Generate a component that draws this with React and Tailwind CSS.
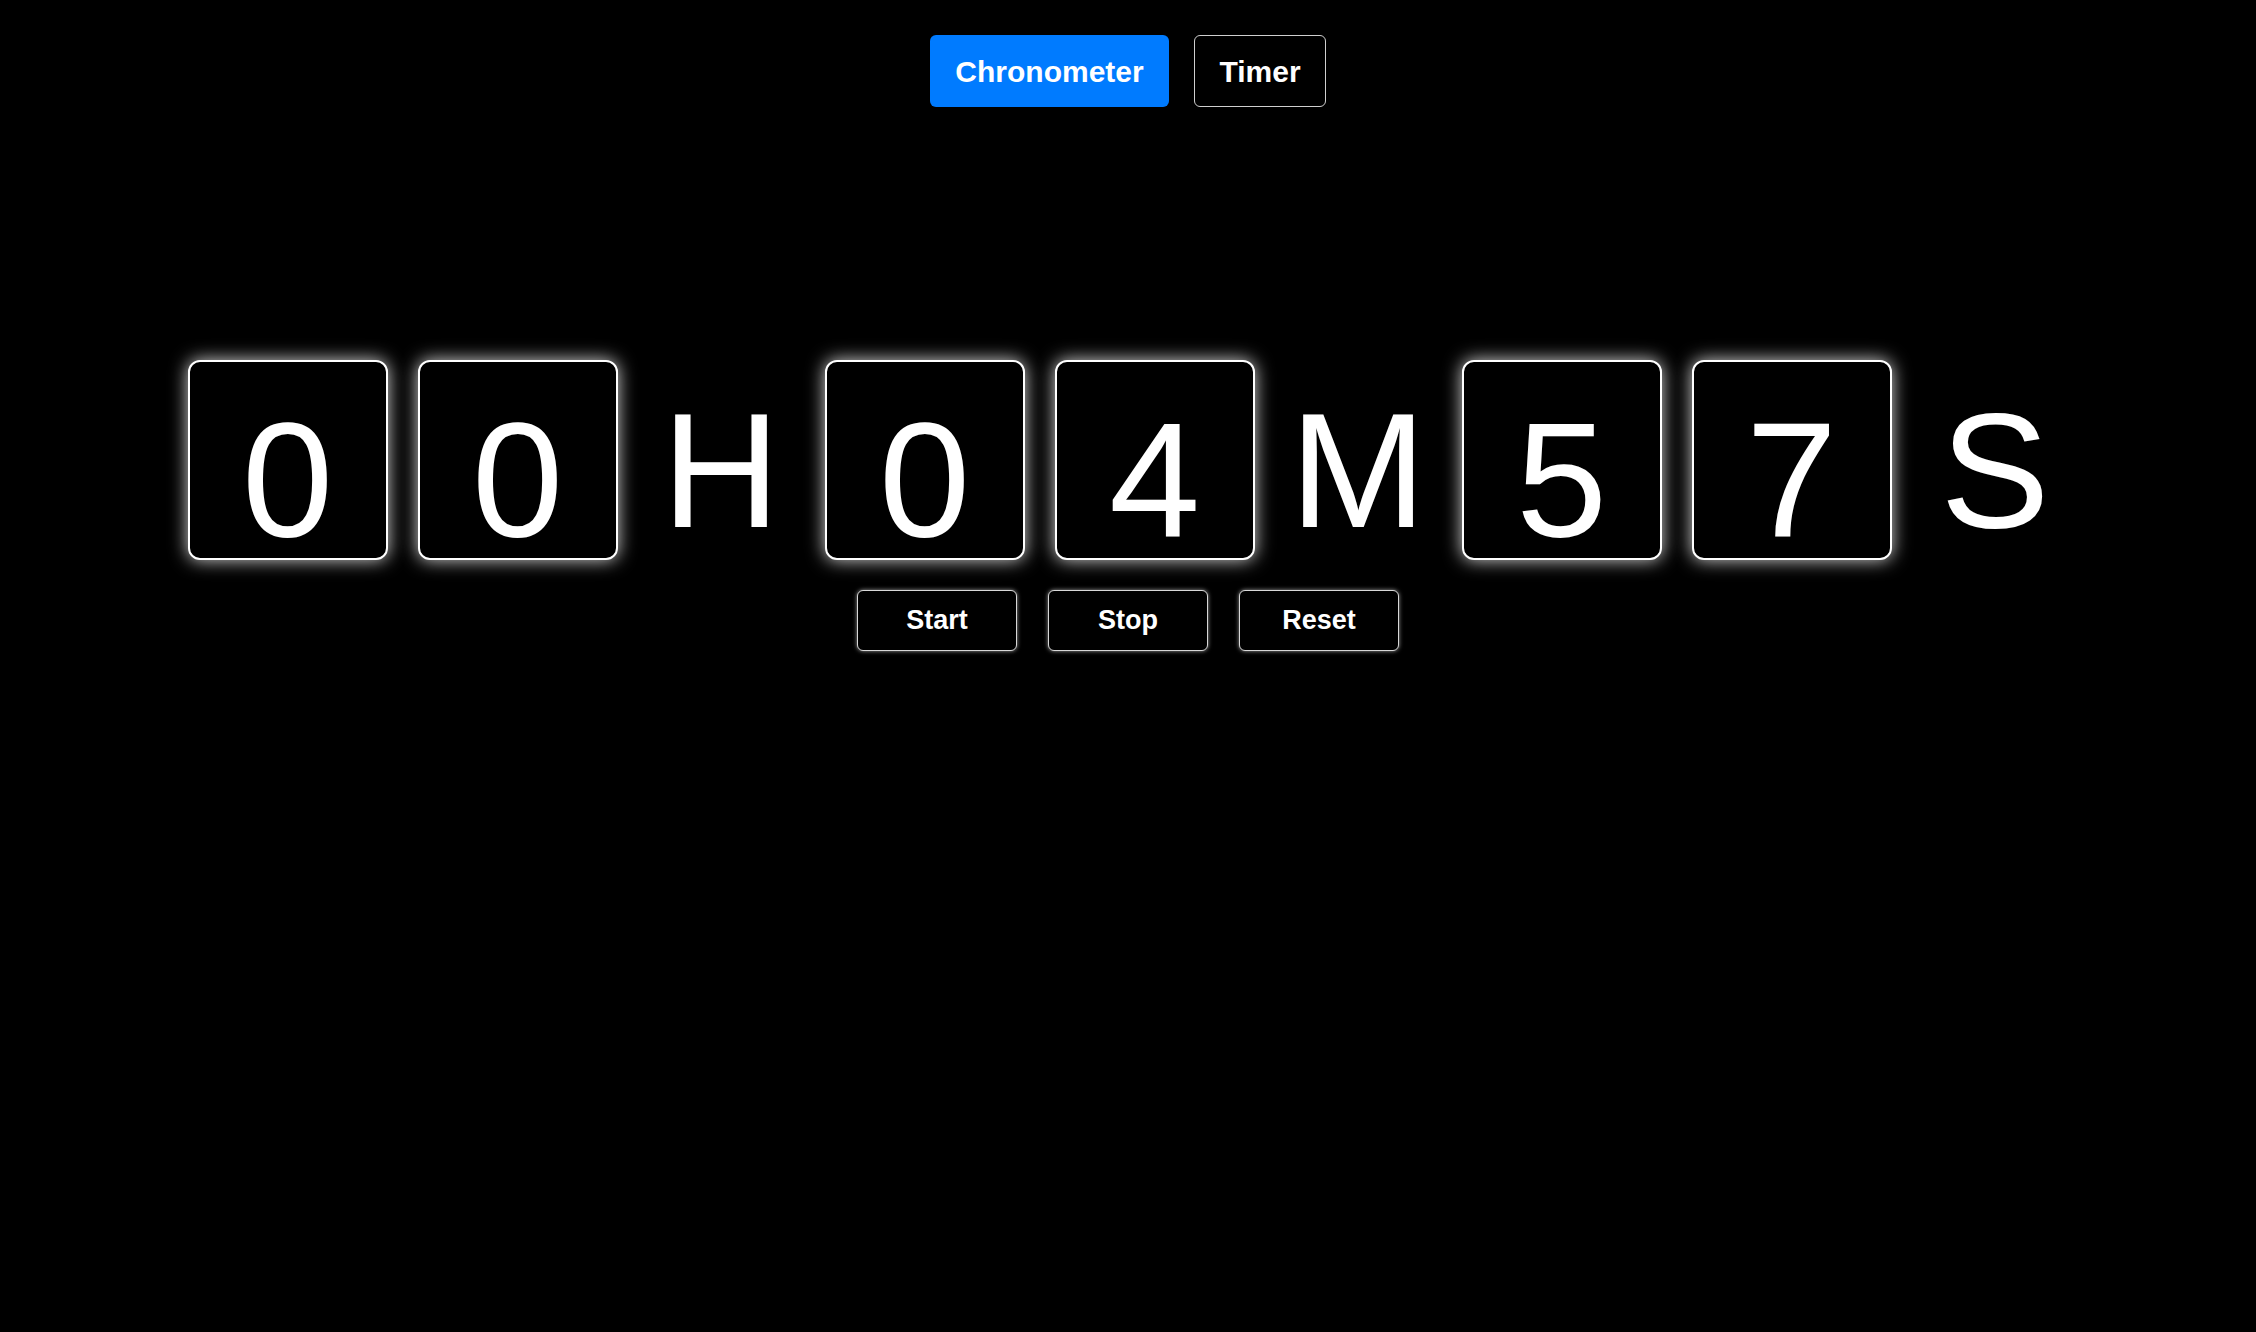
import React from "react";

const FONT = { fontFamily: '"Liberation Sans", Arial, sans-serif' };

function Box({ d }) {
  return (
    <div className="mx-[15px] h-[200px] w-[200px] shrink-0 rounded-xl border-2 border-white bg-black text-center text-[164px] leading-[236px] text-white shadow-[0_0_18px_rgba(255,255,255,0.85)]">
      {d}
    </div>
  );
}

function Letter({ c }) {
  return (
    <div className="h-[200px] w-[177px] shrink-0 text-center text-[164px] leading-[222px] text-white">
      {c}
    </div>
  );
}

export default function App() {
  return (
    <div className="min-h-[1332px] w-full bg-black" style={FONT}>
      <div className="flex justify-center gap-[25px] pt-[35px]">
        <button className="h-[72px] w-[239px] rounded-[6px] bg-[#007bff] text-[30px] font-bold text-white">
          Chronometer
        </button>
        <button className="h-[72px] w-[132px] rounded-[6px] border border-[#cfcfcf] bg-black text-[30px] font-bold text-white">
          Timer
        </button>
      </div>

      <div className="mt-[253px] flex h-[200px] items-start justify-center">
        <Box d="0" />
        <Box d="0" />
        <Letter c="H" />
        <Box d="0" />
        <Box d="4" />
        <Letter c="M" />
        <Box d="5" />
        <Box d="7" />
        <Letter c="S" />
      </div>

      <div className="mt-[30px] flex justify-center gap-[31px]">
        {["Start", "Stop", "Reset"].map((t) => (
          <button
            key={t}
            className="h-[61px] w-[160px] rounded-[6px] border border-[#d8d8d8] bg-black text-[27px] font-bold text-white shadow-[0_0_4px_rgba(255,255,255,0.6)]"
          >
            {t}
          </button>
        ))}
      </div>
    </div>
  );
}
